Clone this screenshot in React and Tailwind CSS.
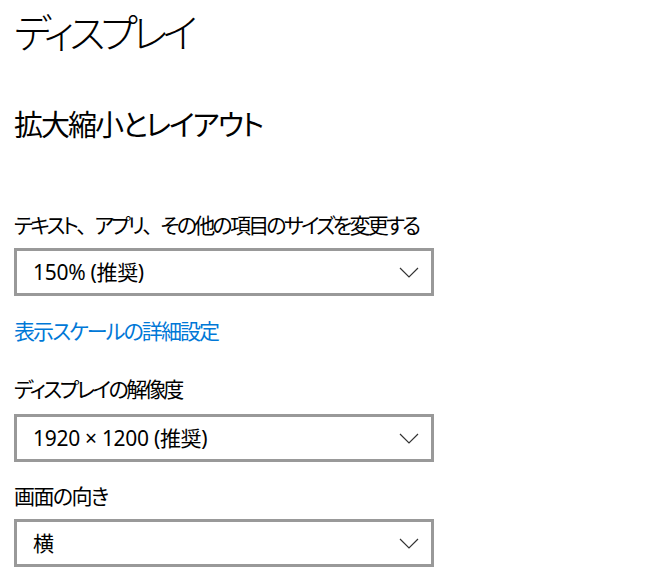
import React from "react";

const jp = "font-['Noto_Sans_CJK_JP','Noto_Sans',sans-serif] [font-feature-settings:'palt']";

function Chevron() {
  return (
    <svg width="20" height="11" viewBox="0 0 20 11" fill="none">
      <polyline points="1,1 10,10 19,1" stroke="#333" strokeWidth="1.2" />
    </svg>
  );
}

function Dropdown({ children, className = "" }) {
  return (
    <div
      className={`w-[420px] h-[48px] border-[3px] border-[#999999] bg-white flex items-center justify-between pl-[16px] pr-[12px] ${className}`}
    >
      <span className="text-[21px] leading-[21px] tracking-[-0.3px] text-black font-['Noto_Sans','Noto_Sans_CJK_JP',sans-serif]">
        {children}
      </span>
      <Chevron />
    </div>
  );
}

function Comma() {
  return <span className="[font-feature-settings:normal]">、</span>;
}

export default function App() {
  return (
    <div className={`w-[648px] h-[585px] bg-white overflow-hidden pl-[14px] pt-[11px] text-black ${jp}`}>
      <div className="text-[40px] leading-[40px] font-light tracking-[-5px]">ディスプレイ</div>
      <div className="mt-[58px] text-[29px] leading-[29px] tracking-[-2px]">拡大縮小とレイアウト</div>
      <div className="mt-[76px] text-[21px] leading-[21px] tracking-[-2.75px]">
        テキスト<Comma />アプリ<Comma />その他の項目のサイズを変更する
      </div>
      <Dropdown className="mt-[13px]">150% (推奨)</Dropdown>
      <div className="mt-[24px] text-[21px] leading-[21px] tracking-[-1.9px] text-[#0078d7]">表示スケールの詳細設定</div>
      <div className="mt-[37px] text-[21px] leading-[21px] tracking-[-2.5px]">ディスプレイの解像度</div>
      <Dropdown className="mt-[15px]">1920 × 1200 (推奨)</Dropdown>
      <div className="mt-[23px] text-[21px] leading-[21px] tracking-[-1.6px]">画面の向き</div>
      <Dropdown className="mt-[13px]">横</Dropdown>
    </div>
  );
}
